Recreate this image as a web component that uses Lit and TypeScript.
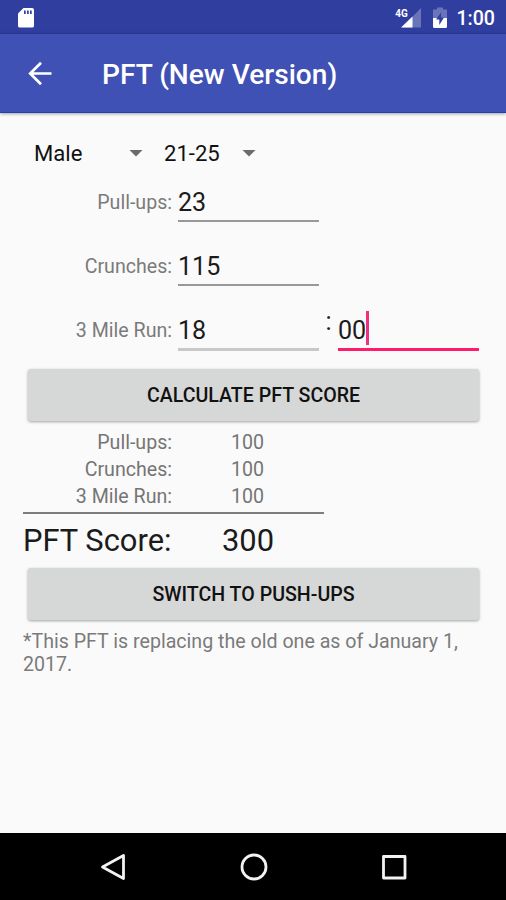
import { LitElement, html, css } from "lit";
import { customElement, property } from "lit/decorators.js";

@customElement("status-bar")
class StatusBar extends LitElement {
  static styles = css`
    :host { display: flex; height: 34px; box-sizing: border-box; background: linear-gradient(#303f9f 31px, #2b3990 34px); color: #fff; align-items: center; padding: 1px 11px 0 16px; }
    .sd { margin-left: 1px; width: 18px; height: 22px; }
    .gap { flex: 1; }
    .signal { width: 28px; height: 24px; }
    .battery { width: 16px; height: 24px; margin-left: 10px; }
    .gen { font: 700 11px Roboto, sans-serif; fill: #fff; }
    .time { font-size: 19.600px; font-weight: 500; margin: 1px 0 0 8px; line-height: 31px; }
  `;
  render() {
    return html`
      <svg class="sd" viewBox="0 0 18 22">
        <path fill="#fff" d="M6.500 1h8.500q2 0 2 2v16q0 1.500-2 1.500H3q-2 0-2-1.500V6.500z" />
        <path fill="#303f9f" d="M7 3.500h1.700v3.500H7zM10 3.500h1.700v3.500H10zM13 3.500h1.700v3.500H13z" />
      </svg>
      <span class="gap"></span>
      <svg class="signal" viewBox="0 0 28 24">
        <path fill="#6974b9" d="M27 2v19.500H8z" />
        <path fill="#303f9f" d="M0 0h15v11H0z" />
        <path fill="#fff" d="M18.500 10.500v11H7z" />
        <text class="gen" x="1.200" y="10.500" textLength="12.500" lengthAdjust="spacingAndGlyphs">4G</text>
      </svg>
      <svg class="battery" viewBox="0 0 16 24">
        <path fill="#6974b9" d="M5 1.500h6v2h4V12H1V3.500h4z" />
        <path fill="#fff" d="M1 12h14v8.500q0 1.500-1.500 1.500h-11Q1 22 1 20.500z" />
        <path fill="#303f9f" d="M9 6.500 4 13.500h3.300v5.500L12 11.500H9z" />
      </svg>
      <span class="time">1:00</span>
    `;
  }
}

@customElement("app-bar")
class AppBar extends LitElement {
  static styles = css`
    :host { display: flex; position: relative; height: 79px; box-sizing: border-box; align-items: center; background: #3f51b5; color: #fff; padding-left: 28px; border-bottom: 1.500px solid #2340ab; box-shadow: 0 1px 3px rgba(0, 0, 0, 0.35); }
    svg { width: 24px; height: 24px; }
    h1 { margin: 4px 0 0 50px; font-size: 28.100px; font-weight: 500; line-height: 40px; }
  `;
  render() {
    return html`
      <svg viewBox="0 0 24 24" fill="none" stroke="#fff" stroke-width="2.700"><path d="M23.500 12.500H2.500M13 1.700 2.200 12.500 13 23.300" /></svg>
      <h1>PFT (New Version)</h1>
    `;
  }
}

@customElement("drop-down")
class DropDown extends LitElement {
  @property() value = "";
  static styles = css`
    :host { display: flex; align-items: center; justify-content: space-between; font-size: 22.100px; line-height: 30px; color: #111; }
    .arrow { width: 14px; height: 7px; background: #6b6b6b; clip-path: polygon(0 0, 100% 0, 50% 100%); }
  `;
  render() {
    return html`<span>${this.value}</span><i class="arrow"></i>`;
  }
}

@customElement("text-field")
class TextField extends LitElement {
  @property() value = "";
  @property({ type: Boolean, reflect: true }) active = false;
  @property({ type: Boolean, reflect: true }) soft = false;
  static styles = css`
    :host { display: flex; align-items: flex-start; box-sizing: border-box; width: 141px; height: 42px; padding-top: 5px; border-bottom: 2px solid #989898; font-size: 25.100px; line-height: 36px; color: #1b1b1b; }
    :host([soft]) { height: 43px; border-bottom: 3px solid #c8c8c8; }
    :host([active]) { height: 43px; border-bottom: 3px solid #ff1a6c; }
    .caret { width: 3px; height: 34px; background: #f0307c; margin-top: -2px; }
  `;
  render() {
    return html`<span>${this.value}</span>${this.active ? html`<i class="caret"></i>` : ""}`;
  }
}

@customElement("app-root")
class AppRoot extends LitElement {
  static styles = css`
    :host { display: flex; flex-direction: column; height: 900px; width: 506px; background: #fafafa; font-family: Roboto, sans-serif; color: #1b1b1b; }
    main { flex: 1; padding: 25px 27px 0 23px; display: flex; flex-direction: column; }
    .choices { display: flex; height: 42px; padding-left: 11px; gap: 21px; align-items: flex-start; }
    .gender { width: 109px; }
    .age { width: 92px; }
    .field { display: flex; height: 64px; gap: 6px; align-items: flex-start; }
    .field:nth-of-type(4) { height: 61px; }
    .label { width: 149px; text-align: right; font-size: 19.600px; line-height: 46px; color: #7b7b7b; }
    .colon { width: 7px; font-size: 25.300px; line-height: 28px; text-align: center; }
    button { flex: none; font: 500 19.600px/52px Roboto, sans-serif; color: #111; height: 52px; margin: 0 0 0 5px; padding: 1px 0 0; width: 451px; border: 0; border-radius: 3px; background: #d6d7d7; box-shadow: 0 1px 3px rgba(0, 0, 0, 0.36); }
    .results { display: flex; flex-direction: column; box-sizing: border-box; width: 301px; padding-top: 8px; height: 93px; border-bottom: 2px solid #7d7d7d; margin-bottom: 9px; }
    .result { display: flex; height: 27px; gap: 59px; font-size: 19.600px; line-height: 27px; color: #757575; }
    .result .name { width: 149px; text-align: right; }
    .total { display: flex; height: 36px; gap: 50px; margin-bottom: 9px; font-size: 30.900px; line-height: 36px; color: #1b1b1b; }
    .total .name { width: 149px; white-space: nowrap; }
    .note { margin: 10px 0 0; font-size: 19.630px; line-height: 23px; color: #7b7b7b; }
    .nav { height: 67px; background: #000; display: flex; align-items: center; justify-content: space-between; padding: 0 98px 0 99px; }
    .nav svg { width: 28px; height: 28px; fill: none; stroke: #f2f2f2; stroke-width: 2.800; stroke-linejoin: round; }
  `;
  scores = [["Pull-ups:", "100"], ["Crunches:", "100"], ["3 Mile Run:", "100"]];
  render() {
    return html`
      <status-bar></status-bar>
      <app-bar></app-bar>
      <main>
        <div class="choices">
          <drop-down class="gender" value="Male"></drop-down>
          <drop-down class="age" value="21-25"></drop-down>
        </div>
        <div class="field"><span class="label">Pull-ups:</span><text-field value="23"></text-field></div>
        <div class="field"><span class="label">Crunches:</span><text-field value="115"></text-field></div>
        <div class="field">
          <span class="label">3 Mile Run:</span><text-field soft value="18"></text-field>
          <span class="colon">:</span><text-field active value="00"></text-field>
        </div>
        <button>CALCULATE PFT SCORE</button>
        <div class="results">
          ${this.scores.map(([n, v]) => html`<div class="result"><span class="name">${n}</span><span>${v}</span></div>`)}
        </div>
        <div class="total"><span class="name">PFT Score:</span><span>300</span></div>
        <button>SWITCH TO PUSH-UPS</button>
        <p class="note">*This PFT is replacing the old one as of January 1, 2017.</p>
      </main>
      <div class="nav">
        <svg viewBox="0 0 28 28"><path d="M24.500 2.500v23L3.500 14z" /></svg>
        <svg viewBox="0 0 28 28"><circle cx="14" cy="14" r="12" /></svg>
        <svg viewBox="0 0 28 28"><path d="M3.500 3.500h21.500v21.500H3.500z" /></svg>
      </div>
    `;
  }
}
